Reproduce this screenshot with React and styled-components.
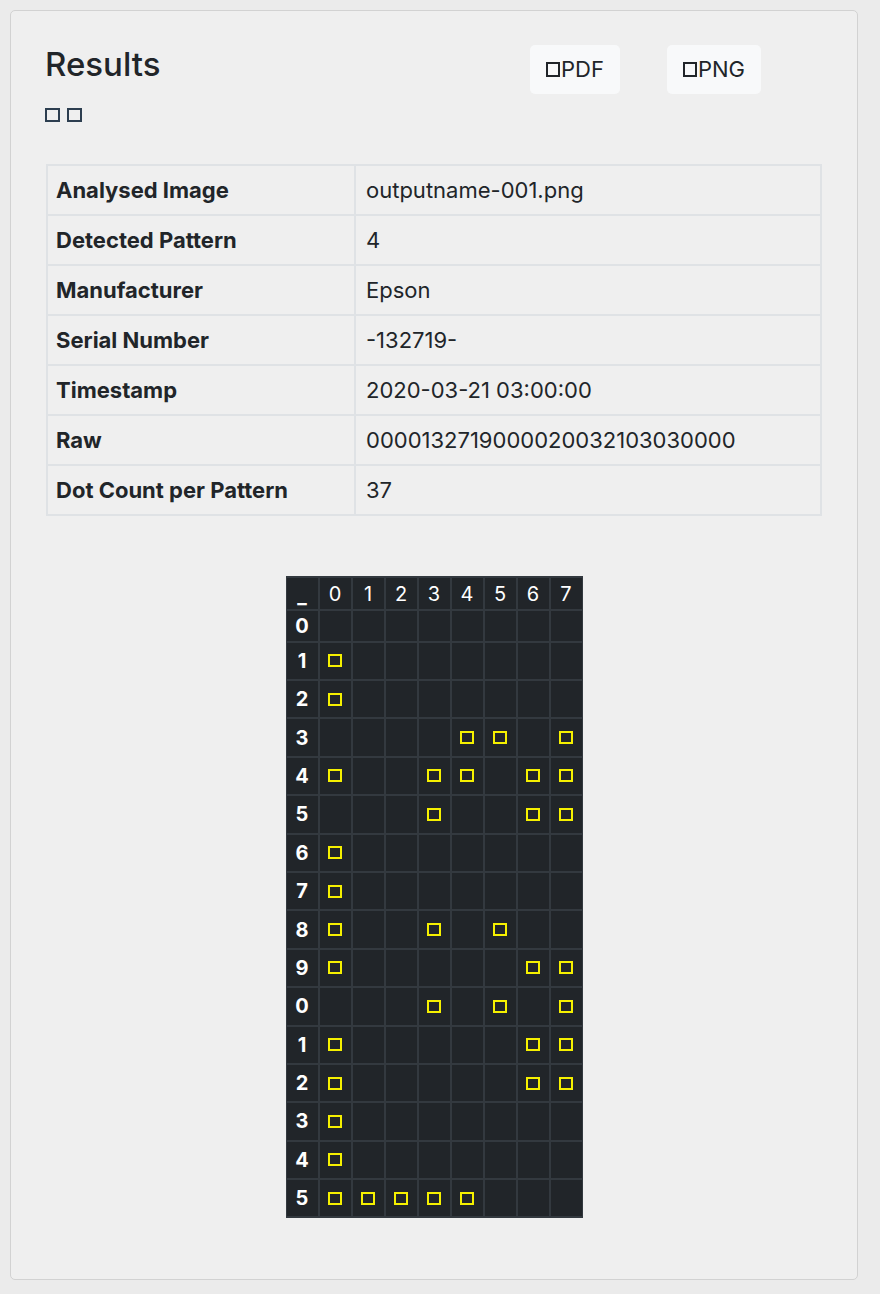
import React from "react";
import styled, { createGlobalStyle } from "styled-components";

const GlobalStyle = createGlobalStyle`
  html, body {
    margin: 0;
    padding: 0;
    background: #ebebeb;
  }
  body {
    font-family: Inter, "Noto Sans", "Liberation Sans", sans-serif;
    color: #212529;
  }
`;

const Page = styled.div`
  padding: 10px 22px 14px 10px;
`;

const Card = styled.div`
  background: #efefef;
  border: 1px solid #d2d2d2;
  border-radius: 5px;
  padding: 34px 35px 61px 35px;
`;

const Header = styled.div`
  display: flex;
  align-items: flex-start;
`;

const TitleBlock = styled.div`
  flex: 1;
`;

const Title = styled.h4`
  margin: 0 0 0 -1px;
  font-size: 33px;
  font-weight: 500;
  line-height: 1.2;
`;

const IconRow = styled.div`
  display: flex;
  gap: 7px;
  margin: 23px 0 0 -1px;
`;

const Box = styled.span`
  display: inline-block;
  box-sizing: border-box;
  flex: none;
  width: ${(p) => p.$w || 15}px;
  height: ${(p) => p.$h || 14}px;
  margin-right: ${(p) => p.$mr || 0}px;
  border: 2px solid ${(p) => p.$color || "#2c3e50"};
`;

const Buttons = styled.div`
  display: flex;
  gap: 47px;
  padding-right: 61px;
`;

const Button = styled.button`
  display: inline-flex;
  align-items: center;
  background: #f8f9fa;
  border: none;
  border-radius: 5px;
  padding: 9px 16px;
  font-family: inherit;
  font-size: 22px;
  line-height: 31px;
  color: #212529;
`;

const InfoTable = styled.table`
  width: 100%;
  margin-top: 42px;
  border-collapse: collapse;
  table-layout: fixed;
  font-size: 22px;
  line-height: 30px;
`;

const Cell = styled.td`
  border: 2px solid #dfe2e5;
  padding: 9px 10px 9px ${(p) => (p.$head ? 8 : 10)}px;
  font-weight: ${(p) => (p.$head ? 700 : 400)};
  width: ${(p) => (p.$head ? "288px" : "auto")};
  text-align: left;
`;

const GridWrap = styled.div`
  display: flex;
  justify-content: center;
  margin-top: 60px;
`;

const DotGrid = styled.div`
  display: grid;
  grid-template-columns: repeat(9, 31px);
  gap: 2px;
  padding: 2px 1px 2px 1px;
  background: #33393f;
  font-size: 20px;
  color: #ffffff;
`;

const GridCell = styled.div`
  background: #212529;
  height: ${(p) => p.$h}px;
  display: flex;
  align-items: center;
  justify-content: center;
  font-weight: ${(p) => (p.$bold ? 700 : 400)};
  padding-top: ${(p) => p.$pt || 0}px;
  box-sizing: border-box;
`;

const info = [
  ["Analysed Image", "outputname-001.png"],
  ["Detected Pattern", "4"],
  ["Manufacturer", "Epson"],
  ["Serial Number", "-132719-"],
  ["Timestamp", "2020-03-21 03:00:00"],
  ["Raw", "0000132719000020032103030000"],
  ["Dot Count per Pattern", "37"],
];

const rows = [
  ["0", []],
  ["1", [0]],
  ["2", [0]],
  ["3", [4, 5, 7]],
  ["4", [0, 3, 4, 6, 7]],
  ["5", [3, 6, 7]],
  ["6", [0]],
  ["7", [0]],
  ["8", [0, 3, 5]],
  ["9", [0, 6, 7]],
  ["0", [3, 5, 7]],
  ["1", [0, 6, 7]],
  ["2", [0, 6, 7]],
  ["3", [0]],
  ["4", [0]],
  ["5", [0, 1, 2, 3, 4]],
];

const cols = [0, 1, 2, 3, 4, 5, 6, 7];

export default function App() {
  return (
    <Page>
      <GlobalStyle />
      <Card>
        <Header>
          <TitleBlock>
            <Title>Results</Title>
            <IconRow>
              <Box />
              <Box />
            </IconRow>
          </TitleBlock>
          <Buttons>
            <Button>
              <Box $w={14} $h={15} $mr={1} $color="#212529" />
              PDF
            </Button>
            <Button>
              <Box $w={14} $h={15} $mr={1} $color="#212529" />
              PNG
            </Button>
          </Buttons>
        </Header>

        <InfoTable>
          <tbody>
            {info.map(([k, v]) => (
              <tr key={k}>
                <Cell $head>{k}</Cell>
                <Cell>{v}</Cell>
              </tr>
            ))}
          </tbody>
        </InfoTable>

        <GridWrap>
          <DotGrid>
            <GridCell $h={31} $bold $pt={6}>_</GridCell>
            {cols.map((c) => (
              <GridCell key={c} $h={31} $pt={2}>
                {c}
              </GridCell>
            ))}
            {rows.map(([label, dots], i) => {
              const h = dots.length ? 36.4 : 30;
              return (
                <React.Fragment key={i}>
                  <GridCell $h={h} $bold>
                    {label}
                  </GridCell>
                  {cols.map((c) => (
                    <GridCell key={c} $h={h}>
                      {dots.includes(c) && <Box $w={14} $h={13} $color="#f5f000" />}
                    </GridCell>
                  ))}
                </React.Fragment>
              );
            })}
          </DotGrid>
        </GridWrap>
      </Card>
    </Page>
  );
}
